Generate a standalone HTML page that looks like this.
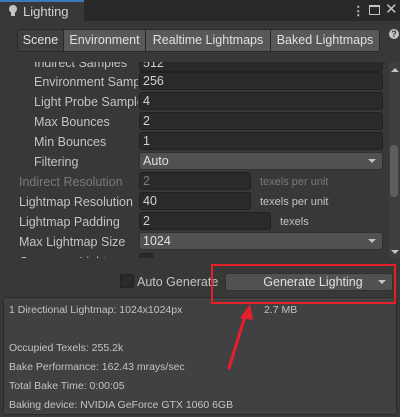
<!DOCTYPE html>
<html><head><style>
*{margin:0;padding:0;box-sizing:border-box}
body{width:400px;height:417px;background:#383838;font-family:"Liberation Sans",sans-serif;font-size:12.5px;color:#c4c4c4;position:relative;overflow:hidden}
.a{position:absolute;white-space:nowrap}
.f{position:absolute;background:#2a2a2a;border:1px solid #212121;border-radius:3px;height:18px;padding-left:3px;line-height:16px;color:#d2d2d2}
.d{position:absolute;background:#515151;border:1px solid #303030;border-radius:3px;height:18px;padding-left:3px;line-height:16px;color:#e0e0e0}
.d:after{content:"";position:absolute;right:6px;top:6px;border-left:4px solid transparent;border-right:4px solid transparent;border-top:4px solid #c4c4c4}
.l{position:absolute;white-space:nowrap;line-height:16px}
.b{position:absolute;top:29px;height:23px;background:#585858;border:1px solid #2a2a2a;line-height:21px;text-align:center;color:#e0e0e0}
.i{font-size:10.5px}
</style></head><body>
<div class="a" style="left:0;top:0;width:400px;height:21px;background:#282828"></div>
<div class="a" style="left:0;top:0;width:84px;height:21px;background:#383838;border-top:2px solid #3a79bb"></div>
<div class="a" style="left:9px;top:5px;width:8px;height:8px;border-radius:50%;background:#c4c4c4"></div>
<div class="a" style="left:11px;top:12px;width:4px;height:4px;background:#c4c4c4"></div>
<div class="l" style="left:23px;top:4px;color:#d2d2d2;font-size:13px">Lighting</div>
<div class="l" style="left:352px;top:3px;color:#c4c4c4;font-weight:bold">⋮</div>
<div class="a" style="left:369px;top:5px;width:11px;height:10px;border:1px solid #c4c4c4;border-top-width:2px"></div>
<div class="l" style="left:385px;top:2px;font-size:15px;color:#c4c4c4">✕</div>
<div class="b" style="left:17px;width:47px;background:#3f3f3f;border-radius:3px 0 0 3px">Scene</div>
<div class="b" style="left:63px;width:83px">Environment</div>
<div class="b" style="left:145px;width:126px">Realtime Lightmaps</div>
<div class="b" style="left:270px;width:110px;border-radius:0 3px 3px 0">Baked Lightmaps</div>
<div class="a" style="left:389px;top:29px;width:10px;height:10px;border-radius:50%;background:#c4c4c4;color:#383838;font-size:9px;font-weight:bold;text-align:center;line-height:10px">?</div>
<div class="a" style="left:0;top:62px;width:389px;height:196px;overflow:hidden">
<div class="l" style="left:34px;top:-7px">Indirect Samples</div><div class="f" style="left:139px;top:-8px;width:244px">512</div>
<div class="l" style="left:34px;top:12px;width:104px;overflow:hidden">Environment Samples</div><div class="f" style="left:139px;top:10px;width:244px">256</div>
<div class="l" style="left:34px;top:32px;width:104px;overflow:hidden">Light Probe Samples</div><div class="f" style="left:139px;top:30px;width:244px">4</div>
<div class="l" style="left:34px;top:52px">Max Bounces</div><div class="f" style="left:139px;top:50px;width:244px">2</div>
<div class="l" style="left:34px;top:72px">Min Bounces</div><div class="f" style="left:139px;top:70px;width:244px">1</div>
<div class="l" style="left:34px;top:92px">Filtering</div><div class="d" style="left:139px;top:90px;width:244px">Auto</div>
<div class="l" style="left:19px;top:112px;color:#7a7a7a">Indirect Resolution</div><div class="f" style="left:139px;top:110px;width:112px;color:#7a7a7a">2</div><div class="l" style="left:260px;top:112px;color:#7a7a7a;font-size:11px">texels per unit</div>
<div class="l" style="left:19px;top:132px">Lightmap Resolution</div><div class="f" style="left:139px;top:130px;width:112px">40</div><div class="l" style="left:260px;top:132px;font-size:11px">texels per unit</div>
<div class="l" style="left:19px;top:152px">Lightmap Padding</div><div class="f" style="left:139px;top:150px;width:132px">2</div><div class="l" style="left:280px;top:152px;font-size:11px">texels</div>
<div class="l" style="left:19px;top:172px">Max Lightmap Size</div><div class="d" style="left:139px;top:170px;width:244px">1024</div>
<div class="l" style="left:19px;top:192px">Compress Lightmaps</div><div class="f" style="left:139px;top:191px;width:14px">✓</div>
</div>
<div class="a" style="left:389px;top:62px;width:11px;height:196px;background:#3e3e3e"></div>
<div class="a" style="left:391px;top:68px;border-left:4px solid transparent;border-right:4px solid transparent;border-bottom:4px solid #c4c4c4"></div>
<div class="a" style="left:390px;top:145px;width:8px;height:52px;background:#5e5e5e;border-radius:4px"></div>
<div class="a" style="left:391px;top:250px;border-left:4px solid transparent;border-right:4px solid transparent;border-top:4px solid #c4c4c4"></div>
<div class="a" style="left:120px;top:274px;width:14px;height:14px;background:#2a2a2a;border:1px solid #212121;border-radius:2px"></div>
<div class="l" style="left:137px;top:274px">Auto Generate</div>
<div class="d" style="left:225px;top:273px;width:168px;text-align:center;line-height:16px;padding-left:8px">Generate Lighting</div>
<div class="a" style="left:3px;top:297px;width:394px;height:118px;background:#414141;border:1px solid #2a2a2a;border-radius:3px"></div>
<div class="a" style="left:211px;top:264px;width:185px;height:40px;border:2px solid #e5202a"></div>
<div class="l i" style="left:9px;top:302px">1 Directional Lightmap: 1024x1024px</div>
<div class="l i" style="left:264px;top:302px">2.7 MB</div>
<div class="l i" style="left:9px;top:340px">Occupied Texels: 255.2k</div>
<div class="l i" style="left:9px;top:359px">Bake Performance: 162.43 mrays/sec</div>
<div class="l i" style="left:9px;top:378px">Total Bake Time: 0:00:05</div>
<div class="l i" style="left:9px;top:397px">Baking device: NVIDIA GeForce GTX 1060 6GB</div>
<svg class="a" style="left:0;top:0" width="400" height="417"><line x1="229" y1="368" x2="246" y2="313" stroke="#e5202a" stroke-width="3" stroke-linecap="round"/><polygon points="250,304 240,318 253,320" fill="#e5202a"/></svg>
</body></html>
